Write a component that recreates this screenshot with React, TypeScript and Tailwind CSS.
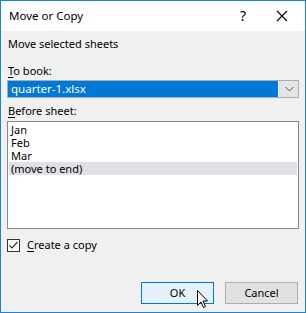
import React from "react";

const font = { fontFamily: '"Segoe UI", "Noto Sans", "Liberation Sans", sans-serif' };

function U({ c }: { c: string }) {
  return <span className="underline underline-offset-2">{c}</span>;
}

export default function App() {
  return (
    <div
      className="relative w-[306px] h-[313px] border border-[#1883d7] bg-[#f0f0f0] flex flex-col text-[11px] leading-[16px] text-black overflow-hidden"
      style={font}
    >
      <div className="h-[30px] bg-white flex items-center pl-[8px] shrink-0">
        <span className="text-[11.5px]">Move or Copy</span>
        <span className="ml-auto mr-[30px] text-[14px]">?</span>
        <svg width="12" height="12" viewBox="0 0 12 12" className="mr-[17px]">
          <path d="M1 1L11 11M11 1L1 11" stroke="#000" strokeWidth="1.1" />
        </svg>
      </div>
      <div className="flex flex-col px-[6px]">
        <div className="mt-[5px] pl-[1px]">Move selected sheets</div>
        <div className="mt-[11px] pl-[1px]">
          <U c="T" />o book:
        </div>
        <div className="mt-[1px] h-[18px] w-[292px] border border-[#adadad] bg-white flex">
          <div className="flex-1 bg-[#0078d7] text-white pl-[3px] leading-[15px] mr-[1px] text-[11.5px]">
            quarter-1.xlsx
          </div>
          <div className="w-[19px] bg-[#e5e5e5] border-l border-[#dadada] flex items-center justify-center">
            <svg width="9" height="6" viewBox="0 0 9 6">
              <path d="M0.5 1L4.5 5L8.5 1" stroke="#555" strokeWidth="1" fill="none" />
            </svg>
          </div>
        </div>
        <div className="mt-[5px] pl-[1px]">
          <U c="B" />efore sheet:
        </div>
        <div className="mt-[2px] h-[108px] w-[292px] border border-[#828790] bg-white flex flex-col pt-[1px] px-[1px]">
          <div className="h-[13px] leading-[13px] pl-[2px] overflow-hidden">Jan</div>
          <div className="h-[13px] leading-[13px] pl-[2px] overflow-hidden">Feb</div>
          <div className="h-[13px] leading-[13px] pl-[2px] overflow-hidden">Mar</div>
          <div className="h-[13px] leading-[13px] pl-[2px] bg-[#e0e0e6] overflow-hidden">(move to end)</div>
        </div>
        <div className="mt-[8px] flex items-center">
          <div className="w-[13px] h-[13px] border border-[#333] bg-white flex items-center justify-center">
            <svg width="11" height="11" viewBox="0 0 11 11">
              <path d="M1.5 5.5L4 8L9.5 2" stroke="#333" strokeWidth="1.2" fill="none" />
            </svg>
          </div>
          <span className="ml-[7px]">
            <U c="C" />reate a copy
          </span>
        </div>
        <div className="mt-[29px] flex justify-end gap-[11px] pr-[1px]">
          <div className="w-[73px] h-[22px] border border-[#0078d7] bg-[#e5f1fb] flex items-center justify-center">
            OK
          </div>
          <div className="w-[73px] h-[22px] border border-[#adadad] bg-[#e1e1e1] flex items-center justify-center">
            Cancel
          </div>
        </div>
      </div>
      <svg
        className="absolute left-[196px] top-[289px]"
        width="12"
        height="19"
        viewBox="0 0 12 19"
      >
        <path
          d="M0.5 0.5L0.5 15.5L4 12L6.5 17.5L8.5 16.5L6 11L10.5 11Z"
          fill="#fff"
          stroke="#000"
          strokeWidth="1"
          strokeLinejoin="miter"
        />
      </svg>
    </div>
  );
}
